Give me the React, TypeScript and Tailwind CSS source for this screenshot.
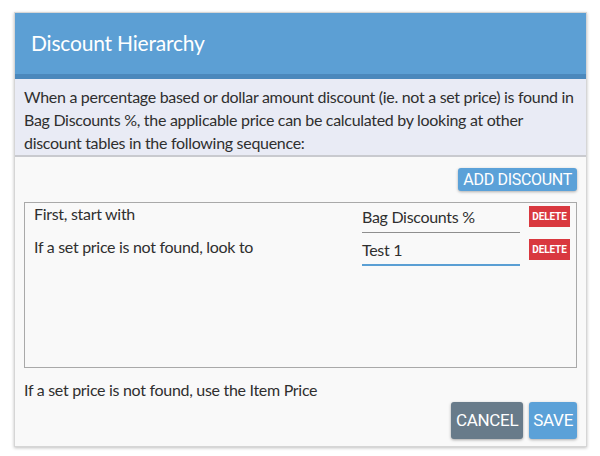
export default function App() {
  const rows = [
    { label: "First, start with", value: "Bag Discounts %", active: false },
    { label: "If a set price is not found, look to", value: "Test 1", active: true },
  ];

  return (
    <div className="bg-white w-[600px] h-[456px] pt-[12px] pl-[14px]" style={{ fontFamily: "Lato, 'Open Sans', sans-serif" }}>
      <div className="w-[573px] h-[435px] flex flex-col bg-[#f9f9f9] border border-[#d6d6d6] shadow-[0_1px_3px_rgba(0,0,0,0.25)]">
        <div className="h-[59px] bg-[#5c9fd4] border-b-[5px] border-[#4b88bc] flex items-center px-[16px] pb-[2px] box-content">
          <h1 className="text-[21px] text-white leading-none tracking-[-0.2px]">Discount Hierarchy</h1>
        </div>

        <div className="bg-[#e9ebf5] border-b-2 border-[#c9cacf] px-[9px] pt-[6px] pb-[1px] text-[16px] leading-[23px] tracking-[-0.3px] text-[#2f2f2f]">
          When a percentage based or dollar amount discount (ie. not a set price) is found in Bag Discounts %, the applicable price can be calculated by looking at other discount tables in the following sequence:
        </div>

        <div className="flex-1 flex flex-col px-[9px] pt-[11px]">
          <div className="flex justify-end">
            <button
              className="h-[23px] px-[5px] bg-[#5ba1d8] text-white text-[16px] leading-none rounded-[3px] shadow-[0_1px_3px_rgba(0,0,0,0.3)] tracking-[-0.3px]"
              style={{ fontFamily: "Roboto, sans-serif" }}
            >
              ADD DISCOUNT
            </button>
          </div>

          <div className="mt-[11px] h-[166px] border border-[#a9a9a9] pl-[9px] pr-[6px]">
            {rows.map((r) => (
              <div key={r.label} className="flex items-start h-[33px]">
                <div className="flex-1 text-[16px] leading-[22px] tracking-[-0.3px] text-[#2f2f2f]">{r.label}</div>
                <div
                  className={
                    "w-[158px] mt-[3px] h-[27px] text-[16px] leading-[22px] tracking-[-0.3px] text-[#2f2f2f] " +
                    (r.active ? "border-b-2 border-[#5a9fd4]" : "border-b border-[#8f8f8f]")
                  }
                >
                  {r.value}
                </div>
                <button
                  className="ml-[9px] mt-[3px] w-[41px] h-[21px] bg-[#d9383f] text-white text-[10px] font-bold leading-none tracking-[-0.1px]"
                  style={{ fontFamily: "Roboto, sans-serif" }}
                >
                  DELETE
                </button>
              </div>
            ))}
          </div>

          <div className="mt-[11px] text-[16px] leading-[22px] tracking-[-0.3px] text-[#2f2f2f]">If a set price is not found, use the Item Price</div>

          <div className="flex justify-end gap-[6px] mt-[1px]">
            <button
              className="h-[37px] px-[5px] bg-[#687b8a] text-white text-[17px] leading-none rounded-[3px] shadow-[0_1px_3px_rgba(0,0,0,0.35)] tracking-[-0.3px]"
              style={{ fontFamily: "Roboto, sans-serif" }}
            >
              CANCEL
            </button>
            <button
              className="h-[37px] px-[4px] bg-[#5ba1d8] text-white text-[17px] leading-none rounded-[3px] shadow-[0_1px_3px_rgba(0,0,0,0.3)] tracking-[-0.3px]"
              style={{ fontFamily: "Roboto, sans-serif" }}
            >
              SAVE
            </button>
          </div>
        </div>
      </div>
    </div>
  );
}
